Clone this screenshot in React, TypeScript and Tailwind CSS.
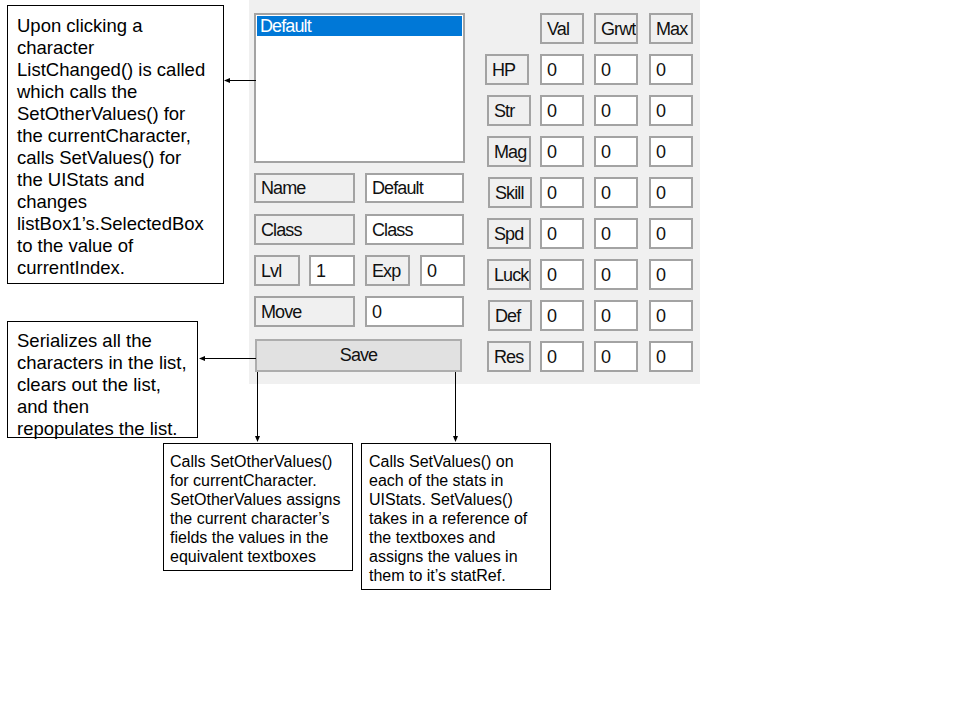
import React from 'react';

const note1 = [
  'Upon clicking a',
  'character',
  'ListChanged() is called',
  'which calls the',
  'SetOtherValues() for',
  'the currentCharacter,',
  'calls SetValues() for',
  'the UIStats and',
  'changes',
  'listBox1\u2019s.SelectedBox',
  'to the value of',
  'currentIndex.',
];

const note2 = [
  'Serializes all the',
  'characters in the list,',
  'clears out the list,',
  'and then',
  'repopulates the list.',
];

const note3 = [
  'Calls SetOtherValues()',
  'for currentCharacter.',
  'SetOtherValues assigns',
  'the current character\u2019s',
  'fields the values in the',
  'equivalent textboxes',
];

const note4 = [
  'Calls SetValues() on',
  'each of the stats in',
  'UIStats. SetValues()',
  'takes in a reference of',
  'the textboxes and',
  'assigns the values in',
  'them to it\u2019s statRef.',
];

const stats = [
  { name: 'HP', shift: 'ml-0' },
  { name: 'Str', shift: 'ml-[2px]' },
  { name: 'Mag', shift: 'ml-[2px]' },
  { name: 'Skill', shift: 'ml-[3px]' },
  { name: 'Spd', shift: 'ml-[2px]' },
  { name: 'Luck', shift: 'ml-[2px]' },
  { name: 'Def', shift: 'ml-[3px]' },
  { name: 'Res', shift: 'ml-[2px]' },
];

const ctl = "flex items-center pl-[5px] text-[18px] tracking-[-0.9px] text-[#111] leading-none overflow-hidden whitespace-nowrap border-2 border-[#a3a3a3]";

const Label = ({ text, className }: { text: string; className: string }) => (
  <div className={`${ctl} bg-[#f0f0f0] ${className}`}>{text}</div>
);

const Field = ({ text, className }: { text: string; className: string }) => (
  <div className={`${ctl} bg-white ${className}`}>{text}</div>
);

const Note = ({ lines, className }: { lines: string[]; className: string }) => (
  <div className={`absolute border border-black bg-white text-black ${className}`}>
    {lines.map((l) => (
      <div key={l} className="whitespace-nowrap">{l}</div>
    ))}
  </div>
);

export default function App() {
  return (
    <div className="relative w-[960px] h-[720px] bg-white overflow-hidden font-['Liberation_Sans',Arial,sans-serif]">
      {/* form screenshot */}
      <div className="absolute left-[249px] top-0 w-[451px] h-[384px] bg-[#f0f0f0] flex pt-[13px] pl-[5px]">
        <div className="w-[211px] flex flex-col">
          <div className="h-[150px] bg-white border-2 border-[#a3a3a3] p-px">
            <div className="h-[20px] bg-[#0078d7] text-white text-[18px] tracking-[-0.9px] leading-[20px] pl-[3px]">Default</div>
          </div>
          <div className="flex mt-[10px] h-[30px]">
            <Label text="Name" className="w-[101px]" />
            <Field text="Default" className="w-[99px] ml-[10px]" />
          </div>
          <div className="flex mt-[11px] h-[31px]">
            <Label text="Class" className="w-[101px]" />
            <Field text="Class" className="w-[99px] ml-[10px]" />
          </div>
          <div className="flex mt-[10px] h-[31px]">
            <Label text="Lvl" className="w-[46px]" />
            <Field text="1" className="w-[46px] ml-[9px]" />
            <Label text="Exp" className="w-[45px] ml-[10px] pl-[2px]" />
            <Field text="0" className="w-[45px] ml-[10px]" />
          </div>
          <div className="flex mt-[10px] h-[31px]">
            <Label text="Move" className="w-[101px]" />
            <Field text="0" className="w-[99px] ml-[10px]" />
          </div>
          <div className="mt-[12px] ml-px w-[207px] h-[33px] bg-[#e1e1e1] border-2 border-[#adadad] flex items-center justify-center text-[18px] tracking-[-0.9px] text-[#111]">
            Save
          </div>
        </div>

        <div className="ml-[20px] flex flex-col gap-[10px]">
          <div className="flex h-[31px]">
            <div className="w-[55px]" />
            <Label text="Val" className="w-[44px]" />
            <Label text="Grwt" className="w-[44px] ml-[10px] pl-[3px]" />
            <Label text="Max" className="w-[44px] ml-[11px]" />
          </div>
          {stats.map((s) => (
            <div key={s.name} className="flex h-[31px]">
              <div className="w-[55px] flex">
                <Label text={s.name} className={`w-[44px] ${s.shift}`} />
              </div>
              <Field text="0" className="w-[44px]" />
              <Field text="0" className="w-[44px] ml-[10px]" />
              <Field text="0" className="w-[44px] ml-[11px]" />
            </div>
          ))}
        </div>
      </div>

      {/* annotations */}
      <Note lines={note1} className="left-[7px] top-[5px] w-[217px] h-[279px] pl-[9px] pt-[9px] text-[18.5px] leading-[22px]" />
      <Note lines={note2} className="left-[7px] top-[321px] w-[191px] h-[117px] pl-[9px] pt-[8px] text-[18.5px] leading-[22px]" />
      <Note lines={note3} className="left-[163px] top-[443px] w-[190px] h-[128px] pl-[6px] pt-[8px] text-[16px] leading-[19px]" />
      <Note lines={note4} className="left-[361px] top-[443px] w-[190px] h-[147px] pl-[7px] pt-[8px] text-[16px] leading-[19px]" />

      {/* connectors */}
      <svg className="absolute left-0 top-0 pointer-events-none" width="960" height="720" shapeRendering="crispEdges">
        <line x1="256" y1="80.5" x2="229" y2="80.5" stroke="black" strokeWidth="1" />
        <polygon points="224,80.5 230,78 230,83" fill="black" shapeRendering="auto" />
        <line x1="256" y1="358.5" x2="204" y2="358.5" stroke="black" strokeWidth="1" />
        <polygon points="199,358.5 205,356 205,361" fill="black" shapeRendering="auto" />
        <line x1="257.5" y1="372" x2="257.5" y2="437" stroke="black" strokeWidth="1" />
        <polygon points="257.5,442 255,436 260,436" fill="black" shapeRendering="auto" />
        <line x1="455.5" y1="372" x2="455.5" y2="437" stroke="black" strokeWidth="1" />
        <polygon points="455.5,442 453,436 458,436" fill="black" shapeRendering="auto" />
      </svg>
    </div>
  );
}
